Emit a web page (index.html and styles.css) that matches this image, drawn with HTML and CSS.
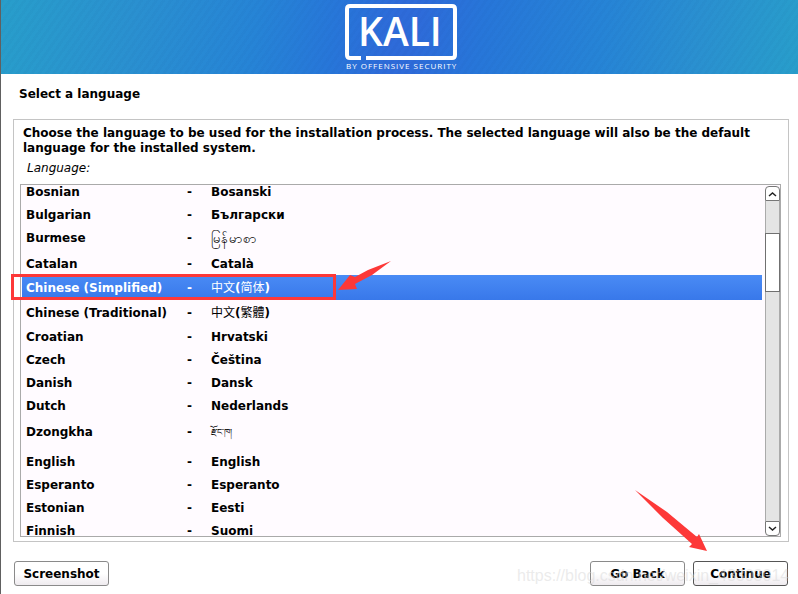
FILE: index.html
```
<!DOCTYPE html>
<html lang="en">

<head>
    <meta charset="utf-8">
    <title>Select a language</title>
    <link rel="stylesheet" href="styles.css">
</head>

<body>
    <header class="banner">
        <svg class="logo" width="112" height="72" viewBox="0 0 112 72" role="img" aria-label="Kali by Offensive Security">
            <path d="M16 58H5q-3 0-3-3V9q0-3 3-3h102q3 0 3 3v46q0 3-3 3H21" fill="none" stroke="#fff" stroke-width="4" />
            <text class="logo-name" x="13" y="46">KALI</text>
            <text class="logo-sub" x="1" y="69">BY OFFENSIVE SECURITY</text>
        </svg>
    </header>

    <main class="content">
        <h1 class="title">Select a language</h1>

        <section class="panel">
            <p class="description">Choose the language to be used for the installation process. The selected language will also be the default language for the installed system.</p>
            <p class="label" id="languageLabel">Language:</p>

            <div class="list">
                <div class="list-view">
                    <table class="languages" aria-labelledby="languageLabel">
                        <tr><td class="name">Bosnian</td><td class="dash">-</td><td>Bosanski</td></tr>
                        <tr><td class="name">Bulgarian</td><td class="dash">-</td><td>Български</td></tr>
                        <tr class="burmese"><td class="name">Burmese</td><td class="dash">-</td><td class="native" lang="my">မြန်မာစာ</td></tr>
                        <tr><td class="name">Catalan</td><td class="dash">-</td><td>Català</td></tr>
                        <tr class="cjk selected"><td class="name">Chinese (Simplified)</td><td class="dash">-</td><td lang="zh-CN"><span class="han">中文</span>(<span class="han">简体</span>)</td></tr>
                        <tr class="cjk"><td class="name">Chinese (Traditional)</td><td class="dash">-</td><td lang="zh-TW"><span class="han">中文</span>(<span class="han">繁體</span>)</td></tr>
                        <tr><td class="name">Croatian</td><td class="dash">-</td><td>Hrvatski</td></tr>
                        <tr><td class="name">Czech</td><td class="dash">-</td><td>Čeština</td></tr>
                        <tr><td class="name">Danish</td><td class="dash">-</td><td>Dansk</td></tr>
                        <tr><td class="name">Dutch</td><td class="dash">-</td><td>Nederlands</td></tr>
                        <tr class="dzongkha"><td class="name">Dzongkha</td><td class="dash">-</td><td class="native" lang="dz">རྫོང་ཁ།</td></tr>
                        <tr><td class="name">English</td><td class="dash">-</td><td>English</td></tr>
                        <tr><td class="name">Esperanto</td><td class="dash">-</td><td>Esperanto</td></tr>
                        <tr><td class="name">Estonian</td><td class="dash">-</td><td>Eesti</td></tr>
                        <tr><td class="name">Finnish</td><td class="dash">-</td><td>Suomi</td></tr>
                    </table>
                </div>

                <div class="scrollbar">
                    <button class="scroll-btn up" type="button" aria-label="Scroll up">
                        <svg width="9" height="6" viewBox="0 0 9 6"><path d="M1 5l3.500-3L8 5" fill="none" stroke="#222" stroke-width="1.500" /></svg>
                    </button>
                    <div class="track">
                        <div class="thumb"></div>
                    </div>
                    <button class="scroll-btn down" type="button" aria-label="Scroll down">
                        <svg width="9" height="6" viewBox="0 0 9 6"><path d="M1 1l3.500 3L8 1" fill="none" stroke="#222" stroke-width="1.500" /></svg>
                    </button>
                </div>
            </div>
        </section>

        <footer class="actions">
            <button class="btn" type="button">Screenshot</button>
            <button class="btn back" type="button">Go Back</button>
            <button class="btn continue" type="button">Continue</button>
        </footer>
    </main>

    <!-- annotations -->
    <div class="highlight"></div>
    <svg class="arrow arrow-row" width="54" height="32" viewBox="0 0 54 32"><path d="M0 29L12 14 17 16 30 9 53 0 34 14 17 23 19 28z" fill="#fd3838" /></svg>
    <svg class="arrow arrow-continue" width="74" height="62" viewBox="0 0 74 62"><path d="M0 0L32 22 62 47 64 44 72 61 54 57 57 54 28 28z" fill="#fd3838" /></svg>
    <div class="watermark">https://blog.csdn.net/weixin_43303014</div>
</body>

</html>
```
FILE: styles.css
```
* {
    box-sizing: border-box;
}

body {
    margin: 0;
    min-height: 100vh;
    display: flex;
    flex-direction: column;
    border-left: 1px solid #606060;
    background-color: #fff;
    color: #000;
    font-family: "DejaVu Sans", "Noto Sans CJK SC", sans-serif;
    font-size: 12px;
    font-weight: bold;
    line-height: 15px;
}

.banner {
    height: 74px;
    display: flex;
    justify-content: center;
    padding-left: 2px;
    background: repeating-linear-gradient(125deg, rgba(0, 0, 60, 0.02) 0 3px, transparent 3px 6px),
        linear-gradient(100deg, #289ecb 0%, #2a90d0 17%, #2684d6 32%, #2776d9 42%, #2e6bd9 49%, #2e6bd9 52%, #2776d9 60%, #2684d6 75%, #2a90d0 87%, #289ecb 100%);
}

.logo-name {
    fill: #fff;
    font-family: "Open Sans", sans-serif;
    font-size: 39px;
    font-weight: 600;
}

.logo-sub {
    fill: #fff;
    font-family: "Open Sans", sans-serif;
    font-size: 8px;
    font-weight: 500;
    letter-spacing: 1px;
}

.content {
    flex: 1;
    display: flex;
    flex-direction: column;
    padding: 13px 9px 8px 12px;
}

.title {
    margin: 0 6px 17px;
    font-size: 12px;
}

.panel {
    flex: 1;
    display: flex;
    flex-direction: column;
    padding: 6px 7px 4px 6px;
    border: 1px solid #c4c4c4;
}

.description {
    margin: 0 3px 5px;
}

.label {
    margin: 0 7px 8px;
    font-style: italic;
    font-weight: normal;
}

.list {
    flex: 1;
    display: flex;
    gap: 3px;
    padding: 0 0 0 1px;
    border: 1px solid #aaa;
    background-color: #fffbff;
}

.list-view {
    flex: 1;
    height: 351px;
    overflow: hidden;
}

.languages {
    width: 100%;
    margin-top: -5px;
    border-collapse: collapse;
}

.languages td {
    height: 23px;
    padding: 2px 0 0;
}

.languages .name {
    width: 165px;
    padding-left: 4px;
}

.languages .dash {
    width: 24px;
}

.languages .burmese td {
    height: 26px;
    padding-bottom: 4px;
}

.languages .dzongkha td {
    height: 33px;
    padding-bottom: 4px;
}

.languages .cjk td {
    height: 25px;
}

.native,
.han {
    font-weight: normal;
}

.burmese .native {
    font-size: 13px;
}

.dzongkha .native {
    font-size: 9px;
}

.selected {
    background: linear-gradient(#4a8bf5, #3878ea);
    color: #fff;
}

.scrollbar {
    width: 15px;
    display: flex;
    flex-direction: column;
    padding-top: 1px;
}

.scroll-btn {
    height: 15px;
    display: flex;
    align-items: center;
    justify-content: center;
    padding: 0;
    border: 1px solid #777;
    background-color: #fff;
}

.scroll-btn.up {
    border-radius: 4px 4px 0 0;
}

.scroll-btn.down {
    border-radius: 0 0 4px 4px;
}

.track {
    flex: 1;
    padding-top: 32px;
    border: solid #aaa;
    border-width: 0 1px;
    background-color: #e4e4e4;
}

.thumb {
    height: 59px;
    margin: 0 -1px;
    border: 1px solid #707070;
    background-color: #fff;
}

.actions {
    display: flex;
    gap: 8px;
    padding: 19px 1px 0;
}

.btn {
    width: 95px;
    height: 25px;
    padding: 1px 0 0;
    border: 1px solid #8a8a8a;
    border-radius: 3px;
    background: linear-gradient(#fff 50%, #efebef);
    color: #000;
    font: inherit;
}

.back {
    margin-left: auto;
}

.continue {
    border-color: #555;
}

.highlight {
    position: absolute;
    left: 11px;
    top: 274px;
    width: 325px;
    height: 26px;
    border: 3px solid #fd3838;
}

.arrow {
    position: absolute;
}

.arrow-row {
    left: 338px;
    top: 261px;
}

.arrow-continue {
    left: 635px;
    top: 490px;
}

.watermark {
    position: absolute;
    left: 517px;
    top: 567px;
    color: rgba(215, 215, 215, 0.5);
    font-family: "Liberation Sans", Arial, sans-serif;
    font-size: 16px;
    font-weight: normal;
    line-height: 18px;
    pointer-events: none;
}
```
